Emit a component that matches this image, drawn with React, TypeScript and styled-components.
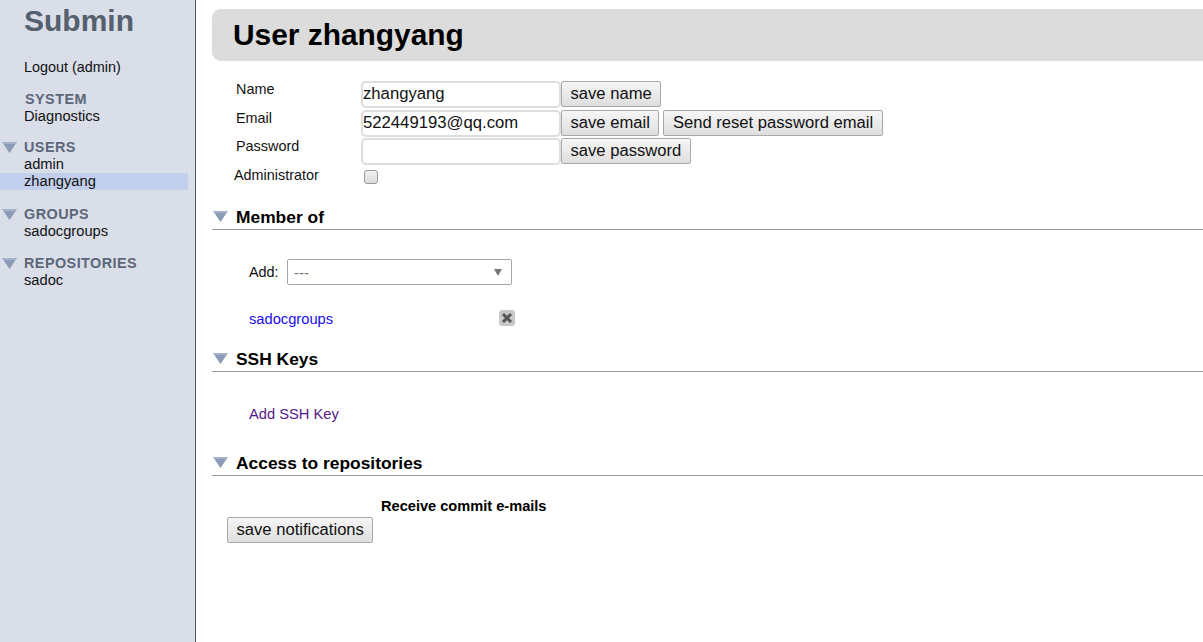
import React from 'react';
import styled, { createGlobalStyle } from 'styled-components';

const Global = createGlobalStyle`
  html, body { margin: 0; padding: 0; height: 100%; background: #fff; overflow: hidden; }
  body { font-family: "Liberation Sans", Arial, sans-serif; font-size: 14.4px; color: #000; }
`;
const Page = styled.div`display: flex; width: 1203px; height: 642px; overflow: hidden;`;
const Sidebar = styled.aside`
  width: 195px; height: 642px; flex: none; box-sizing: content-box; background: #d9dee8;
  border-right: 1px solid #555; padding-right: 0;
`;
const Logo = styled.h1`
  margin: 0; padding: 3px 0 0 24px; height: 40px; font-size: 30px; line-height: 36px; font-weight: 700; color: #55606e;
`;
const Logout = styled.div`padding: 16px 0 0 24px; height: 16px; line-height: 16px; font-size: 14.4px; color: #111;`;
const NavGroup = styled.div<{ $top: number }>`margin-top: ${p => p.$top}px; position: relative;`;
const NavTitle = styled.div<{ $left?: number }>`
  height: 17px; line-height: 17px; padding-left: ${p => p.$left ?? 24}px; font-size: 14.4px; font-weight: 700; color: #5c6779; letter-spacing: .45px;
`;
const NavItem = styled.div<{ $active?: boolean }>`
  width: 188px; height: 17px; line-height: 17px; padding-left: 24px; box-sizing: border-box; font-size: 14.7px; color: #111;
  background: ${p => (p.$active ? '#c1cfec' : 'transparent')};
`;
const Arrow = styled.svg`position: absolute; left: 2px; top: 3px; width: 15px; height: 11px;`;
const Main = styled.main`flex: 1; min-width: 0; padding: 9px 0 0 16px;`;
const Header = styled.h2`
  margin: 0; height: 52px; line-height: 51px; padding-left: 21px; background: #dcdcdc; border-radius: 9px 0 0 9px;
  font-size: 29.9px; font-weight: 700; color: #000;
`;
const Form = styled.div`padding-top: 20px; display: flex; flex-direction: column;`;
const Row = styled.div<{ $h: number }>`display: flex; align-items: flex-start; height: ${p => p.$h}px;`;
const Label = styled.div<{ $left?: number }>`
  width: ${p => 149 - (p.$left ?? 24)}px; padding-left: ${p => p.$left ?? 24}px; font-size: 14.4px; line-height: 17px; color: #111; flex: none;
`;
const Input = styled.input`
  box-sizing: border-box; width: 200px; height: 27px; margin: 0; padding: 0 0 1px; border: 2px solid #dedede; border-radius: 5px;
  font: 16.7px "Liberation Sans", Arial, sans-serif; color: #111; background: #fff; outline: none;
`;
const Button = styled.button<{ $ml?: number }>`
  box-sizing: border-box; height: 26px; margin: 0 0 0 ${p => p.$ml ?? 0}px; padding: 0 8.5px; border: 1px solid #a9a9a9; border-radius: 2px;
  background: linear-gradient(#f6f6f6, #dedede); font: 16.62px "Liberation Sans", Arial, sans-serif; color: #111; white-space: nowrap;
`;
const Check = styled.span`
  display: block; box-sizing: border-box; width: 14px; height: 14px; margin: 3px 0 0 3px; border: 1px solid #999; border-radius: 3px;
  background: linear-gradient(#f0f0f0, #dcdcdc);
`;
const Section = styled.section<{ $top: number }>`margin-top: ${p => p.$top}px;`;
const SectionHead = styled.div`
  position: relative; height: 24px; box-sizing: border-box; border-bottom: 1px solid #999; padding-left: 24px;
  font-size: 17.4px; line-height: 23px; font-weight: 700; color: #000;
`;
const SectionArrow = styled.svg`position: absolute; left: 1px; top: 5px; width: 15px; height: 11px;`;
const AddRow = styled.div`display: flex; align-items: center; margin: 29px 0 0 37px; height: 26px;`;
const AddLabel = styled.span`width: 38px; font-size: 14.4px; color: #111;`;
const Select = styled.div`
  box-sizing: border-box; width: 225px; height: 26px; border: 1px solid #a6a6a6; border-radius: 2px; background: #fff;
  display: flex; align-items: center; justify-content: space-between; padding: 0 9px 0 6px; font-size: 15px; color: #777;
`;
const SelectArrow = styled.svg`width: 8px; height: 7px;`;
const MemberRow = styled.div`display: flex; align-items: flex-start; justify-content: space-between; width: 266px; margin: 24px 0 0 37px; height: 18px;`;
const Link = styled.a<{ $visited?: boolean }>`font-size: 14.7px; line-height: 18px; padding-top: 1px; color: ${p => (p.$visited ? '#551a8b' : '#1a0dee')}; text-decoration: none; display: block;`;
const Remove = styled.svg`width: 16px; height: 16px; display: block; margin-top: 1px;`;
const LinkRow = styled.div`margin: 32px 0 0 37px; height: 18px;`;
const NotifyHead = styled.div`margin: 22px 0 0 169px; font-size: 14.6px; font-weight: 700; line-height: 17px; color: #000;`;
const NotifyBtn = styled(Button)`margin: 2px 0 0 15px; display: block;`;

const Tri = () => (
  <>
    <path d="M0 0h15L7.5 11z" fill="#8c9cb8" />
    <path d="M0 0h15l-1.5 2H1.5z" fill="#a5b3c9" />
  </>
);

export default function App() {
  return (
    <Page>
      <Global />
      <Sidebar>
        <Logo>Submin</Logo>
        <Logout>Logout (admin)</Logout>
        <NavGroup $top={16}>
          <NavTitle $left={25}>SYSTEM</NavTitle>
          <NavItem>Diagnostics</NavItem>
        </NavGroup>
        <NavGroup $top={14}>
          <Arrow viewBox="0 0 15 11"><Tri /></Arrow>
          <NavTitle>USERS</NavTitle>
          <NavItem>admin</NavItem>
          <NavItem $active>zhangyang</NavItem>
        </NavGroup>
        <NavGroup $top={16}>
          <Arrow viewBox="0 0 15 11"><Tri /></Arrow>
          <NavTitle>GROUPS</NavTitle>
          <NavItem>sadocgroups</NavItem>
        </NavGroup>
        <NavGroup $top={15}>
          <Arrow viewBox="0 0 15 11"><Tri /></Arrow>
          <NavTitle>REPOSITORIES</NavTitle>
          <NavItem>sadoc</NavItem>
        </NavGroup>
      </Sidebar>
      <Main>
        <Header>User zhangyang</Header>
        <Form>
          <Row $h={29}>
            <Label>Name</Label>
            <Input defaultValue="zhangyang" />
            <Button>save name</Button>
          </Row>
          <Row $h={28}>
            <Label>Email</Label>
            <Input defaultValue="522449193@qq.com" />
            <Button>save email</Button>
            <Button $ml={4}>Send reset password email</Button>
          </Row>
          <Row $h={29}>
            <Label>Password</Label>
            <Input />
            <Button>save password</Button>
          </Row>
          <Row $h={24}>
            <Label $left={22}>Administrator</Label>
            <Check />
          </Row>
        </Form>
        <Section $top={15}>
          <SectionHead>
            <SectionArrow viewBox="0 0 15 11"><Tri /></SectionArrow>
            Member of
          </SectionHead>
          <AddRow>
            <AddLabel>Add:</AddLabel>
            <Select>
              <span>---</span>
              <SelectArrow viewBox="0 0 8 7"><path d="M0 0h8L4 7z" fill="#777" /></SelectArrow>
            </Select>
          </AddRow>
          <MemberRow>
            <Link href="#">sadocgroups</Link>
            <Remove viewBox="0 0 16 16">
              <rect width="16" height="16" rx="3" fill="#c8c8c8" />
              <path d="M4 4l8 8M12 4l-8 8" stroke="#555" strokeWidth="3" />
            </Remove>
          </MemberRow>
        </Section>
        <Section $top={21}>
          <SectionHead>
            <SectionArrow viewBox="0 0 15 11"><Tri /></SectionArrow>
            SSH Keys
          </SectionHead>
          <LinkRow><Link href="#" $visited>Add SSH Key</Link></LinkRow>
        </Section>
        <Section $top={30}>
          <SectionHead>
            <SectionArrow viewBox="0 0 15 11"><Tri /></SectionArrow>
            Access to repositories
          </SectionHead>
          <NotifyHead>Receive commit e-mails</NotifyHead>
          <NotifyBtn>save notifications</NotifyBtn>
        </Section>
      </Main>
    </Page>
  );
}
